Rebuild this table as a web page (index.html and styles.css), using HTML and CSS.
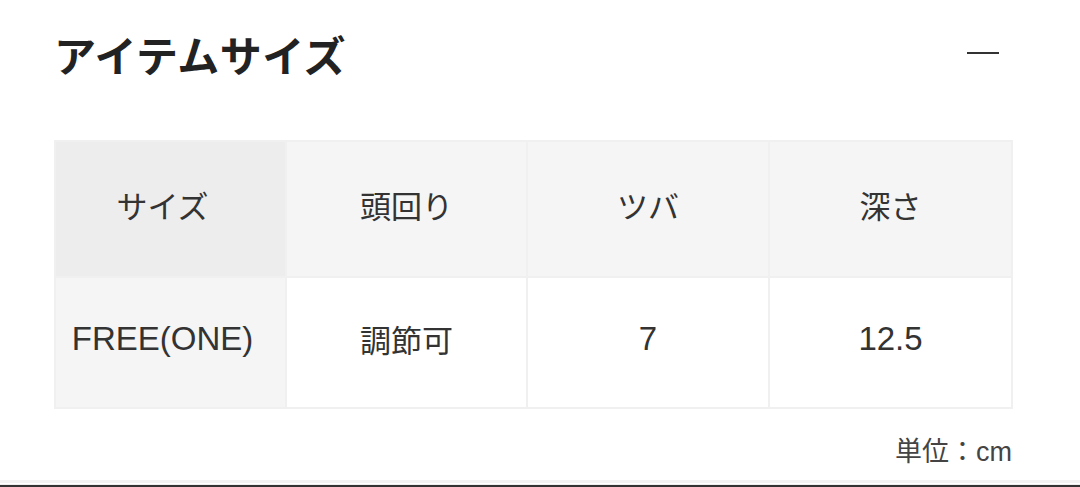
FILE: index.html
```html
<!DOCTYPE html>
<html lang="ja">
<head>
<meta charset="utf-8">
<link rel="stylesheet" href="styles.css">
</head>
<body>
<section class="panel">
  <div class="head">
    <h2 class="title">アイテムサイズ</h2>
    <span class="toggle" aria-label="閉じる"></span>
  </div>
  <table class="size-table">
    <colgroup>
      <col class="c1"><col class="c2"><col class="c3"><col class="c4">
    </colgroup>
    <tr class="row-head">
      <th class="first">サイズ</th>
      <th>頭回り</th>
      <th>ツバ</th>
      <th>深さ</th>
    </tr>
    <tr class="row-body">
      <td class="first latin">FREE(ONE)</td>
      <td>調節可</td>
      <td class="latin">7</td>
      <td class="latin">12.5</td>
    </tr>
  </table>
  <p class="unit">単位：cm</p>
</section>
<div class="bottom-bar"></div>
</body>
</html>
```
FILE: styles.css
```css
html, body {
  margin: 0;
  padding: 0;
  background: #fff;
}
body {
  font-family: "Liberation Sans", "Noto Sans CJK JP", sans-serif;
  color: #333;
  height: 487px;
  display: flex;
  flex-direction: column;
  overflow: hidden;
}
.panel {
  padding: 0 68px 0 54px;
  flex: 1;
}
.head {
  display: flex;
  align-items: center;
  justify-content: space-between;
  height: 110px;
}
.title {
  margin: -2px 0 0;
  font-family: "Noto Sans CJK JP", sans-serif;
  font-size: 42px;
  font-weight: 700;
  line-height: 1;
  color: #222;
  letter-spacing: 0.5px;
}
.toggle {
  width: 32px;
  height: 2px;
  background: #333;
  margin-right: 13px;
  margin-top: -4px;
}
.size-table {
  margin-top: 30px;
  width: 100%;
  border-collapse: collapse;
  table-layout: fixed;
}
.c1 { width: 231px; }
.c2 { width: 241px; }
.c3 { width: 242px; }
.c4 { width: 243px; }
.size-table th,
.size-table td {
  border: 2px solid #f0f0f0;
  text-align: center;
  font-weight: 400;
  font-size: 31px;
  color: #333;
  padding: 0 0 9px;
}
.size-table .first {
  padding-right: 16px;
}
.row-head th {
  height: 125px;
  background: #f5f5f5;
}
.row-head th.first {
  background: #ededed;
}
.row-body td {
  height: 120px;
  background: #fff;
}
.row-body td.latin {
  font-size: 33px;
  padding-bottom: 7px;
  height: 122px;
}
.row-body td.first {
  background: #f5f5f5;
}
.unit {
  margin: 26px 0 0;
  text-align: right;
  font-size: 27px;
  line-height: 34px;
  color: #444;
}
.bottom-bar {
  height: 2px;
  background: #333;
  border-top: 1px solid #eee;
  box-shadow: 0 -4px 0 #f2f2f2;
}
```
